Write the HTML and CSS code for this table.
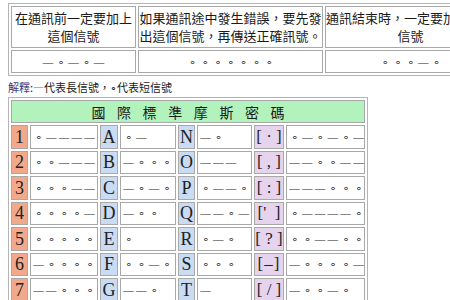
FILE: index.html
```html
<!DOCTYPE html>
<html lang="zh-Hant">
<head>
<meta charset="utf-8">
<title>國際標準摩斯密碼</title>
<link rel="stylesheet" href="styles.css">
</head>
<body>
<table class="sig">
  <colgroup><col class="w1"><col class="w2"><col class="w3"></colgroup>
  <tr class="txt">
    <td>在通訊前一定要加上這個信號</td>
    <td>如果通訊途中發生錯誤，要先發出這個信號，再傳送正確訊號。</td>
    <td>通訊結束時，一定要加上這個信號</td>
  </tr>
  <tr class="code">
    <td><span class="l">—</span><span class="o">∘</span><span class="l">—</span><span class="o">∘</span><span class="l">—</span></td>
    <td><span class="o">∘</span><span class="o">∘</span><span class="o">∘</span><span class="o">∘</span><span class="o">∘</span><span class="o">∘</span><span class="o">∘</span></td>
    <td><span class="o">∘</span><span class="o">∘</span><span class="o">∘</span><span class="l">—</span><span class="o">∘</span></td>
  </tr>
</table>
<p class="note"><span class="key">解釋</span>:<span class="neg">—</span>代表長信號，∘代表短信號</p>
<table class="morse">
  <colgroup><col class="cn"><col class="c1"><col class="cl"><col class="c2"><col class="cm"><col class="c3"><col class="cp"><col class="c4"></colgroup>
  <tr><td class="title" colspan="8">國際標準摩斯密碼</td></tr>
  <tr>
    <td class="num">1</td><td class="m"><span class="o">∘</span><span class="l">—</span><span class="l">—</span><span class="l">—</span><span class="l">—</span></td>
    <td class="let">A</td><td class="m"><span class="o">∘</span><span class="l">—</span></td>
    <td class="let">N</td><td class="m"><span class="l">—</span><span class="o">∘</span></td>
    <td class="pun">[ · ]</td><td class="m"><span class="o">∘</span><span class="l">—</span><span class="o">∘</span><span class="l">—</span><span class="o">∘</span><span class="l">—</span></td>
  </tr>
  <tr>
    <td class="num">2</td><td class="m"><span class="o">∘</span><span class="o">∘</span><span class="l">—</span><span class="l">—</span><span class="l">—</span></td>
    <td class="let">B</td><td class="m"><span class="l">—</span><span class="o">∘</span><span class="o">∘</span><span class="o">∘</span></td>
    <td class="let">O</td><td class="m"><span class="l">—</span><span class="l">—</span><span class="l">—</span></td>
    <td class="pun">[ , ]</td><td class="m"><span class="l">—</span><span class="l">—</span><span class="o">∘</span><span class="o">∘</span><span class="l">—</span><span class="l">—</span></td>
  </tr>
  <tr>
    <td class="num">3</td><td class="m"><span class="o">∘</span><span class="o">∘</span><span class="o">∘</span><span class="l">—</span><span class="l">—</span></td>
    <td class="let">C</td><td class="m"><span class="l">—</span><span class="o">∘</span><span class="l">—</span><span class="o">∘</span></td>
    <td class="let">P</td><td class="m"><span class="o">∘</span><span class="l">—</span><span class="l">—</span><span class="o">∘</span></td>
    <td class="pun">[ : ]</td><td class="m"><span class="l">—</span><span class="l">—</span><span class="l">—</span><span class="o">∘</span><span class="o">∘</span><span class="o">∘</span></td>
  </tr>
  <tr>
    <td class="num">4</td><td class="m"><span class="o">∘</span><span class="o">∘</span><span class="o">∘</span><span class="o">∘</span><span class="l">—</span></td>
    <td class="let">D</td><td class="m"><span class="l">—</span><span class="o">∘</span><span class="o">∘</span></td>
    <td class="let">Q</td><td class="m"><span class="l">—</span><span class="l">—</span><span class="o">∘</span><span class="l">—</span></td>
    <td class="pun">[&#39;&nbsp;&nbsp;]</td><td class="m"><span class="o">∘</span><span class="l">—</span><span class="l">—</span><span class="l">—</span><span class="l">—</span><span class="o">∘</span></td>
  </tr>
  <tr>
    <td class="num">5</td><td class="m"><span class="o">∘</span><span class="o">∘</span><span class="o">∘</span><span class="o">∘</span><span class="o">∘</span></td>
    <td class="let">E</td><td class="m"><span class="o">∘</span></td>
    <td class="let">R</td><td class="m"><span class="o">∘</span><span class="l">—</span><span class="o">∘</span></td>
    <td class="pun">[ ? ]</td><td class="m"><span class="o">∘</span><span class="o">∘</span><span class="l">—</span><span class="l">—</span><span class="o">∘</span><span class="o">∘</span></td>
  </tr>
  <tr>
    <td class="num">6</td><td class="m"><span class="l">—</span><span class="o">∘</span><span class="o">∘</span><span class="o">∘</span><span class="o">∘</span></td>
    <td class="let">F</td><td class="m"><span class="o">∘</span><span class="o">∘</span><span class="l">—</span><span class="o">∘</span></td>
    <td class="let">S</td><td class="m"><span class="o">∘</span><span class="o">∘</span><span class="o">∘</span></td>
    <td class="pun wide">[–]</td><td class="m"><span class="l">—</span><span class="o">∘</span><span class="o">∘</span><span class="o">∘</span><span class="o">∘</span><span class="l">—</span></td>
  </tr>
  <tr>
    <td class="num">7</td><td class="m"><span class="l">—</span><span class="l">—</span><span class="o">∘</span><span class="o">∘</span><span class="o">∘</span></td>
    <td class="let">G</td><td class="m"><span class="l">—</span><span class="l">—</span><span class="o">∘</span></td>
    <td class="let">T</td><td class="m"><span class="l">—</span></td>
    <td class="pun">[ / ]</td><td class="m"><span class="l">—</span><span class="o">∘</span><span class="o">∘</span><span class="l">—</span><span class="o">∘</span></td>
  </tr>
</table>
</body>
</html>
```
FILE: styles.css
```css
html {
  overflow: hidden;
  background: #fff;
}
body {
  margin: 0;
  padding: 3px 0 0 8px;
  font-family: "Noto Sans CJK TC", sans-serif;
  font-size: 13px;
  color: #1a1a1a;
}
table {
  border-collapse: separate;
  border-spacing: 2px;
  border: 1px solid #b4b4b4;
  table-layout: fixed;
}
td {
  border: 1px solid #a8a8a8;
  padding: 0;
  box-sizing: border-box;
}

/* signal table */
.sig { width: 491px; }
.sig .w1 { width: 125px; }
.sig .w2 { width: 185px; }
.sig .w3 { width: 171px; }
.sig td { text-align: center; }
.sig .txt td {
  line-height: 18px;
  padding: 2px 0;
}
.sig .code td {
  height: 23px;
  line-height: 16px;
  white-space: nowrap;
}

.o, .l {
  display: inline-block;
  width: 12.8px;
  text-align: center;
}
.o {
  font-family: "DejaVu Sans", sans-serif;
  font-size: 11px;
}
.l {
  font-family: "Liberation Serif", serif;
  font-size: 10.5px;
}

.note {
  margin: 3px 0 2px;
  line-height: 16px;
  font-size: 11px;
}
.key { color: #3d3a7c; }
.neg { color: #d4464c; }

/* morse table */
.morse { width: 360px; }
.morse .cn { width: 17px; }
.morse .c1 { width: 68px; }
.morse .cl { width: 18px; }
.morse .c2 { width: 56px; }
.morse .cm { width: 17px; }
.morse .c3 { width: 55px; }
.morse .cp { width: 30px; }
.morse .c4 { width: 79px; }
.morse td {
  height: 23.5px;
  line-height: 16px;
}
.morse .title {
  height: 23px;
  background: #b2f2bc;
  text-align: center;
  font-size: 14px;
  letter-spacing: 11.6px;
  padding-left: 11.6px;
}
.num, .let, .pun {
  font-family: "Liberation Serif", serif;
  font-size: 18px;
  text-align: center;
  white-space: nowrap;
  color: #222;
}
.num { background: #f2a88b; }
.let { background: #c9dcf4; }
.pun {
  background: #e6d4ef;
  font-size: 17px;
}
.pun.wide { letter-spacing: 1px; }
.m {
  white-space: nowrap;
  padding-left: 1px;
}
```
